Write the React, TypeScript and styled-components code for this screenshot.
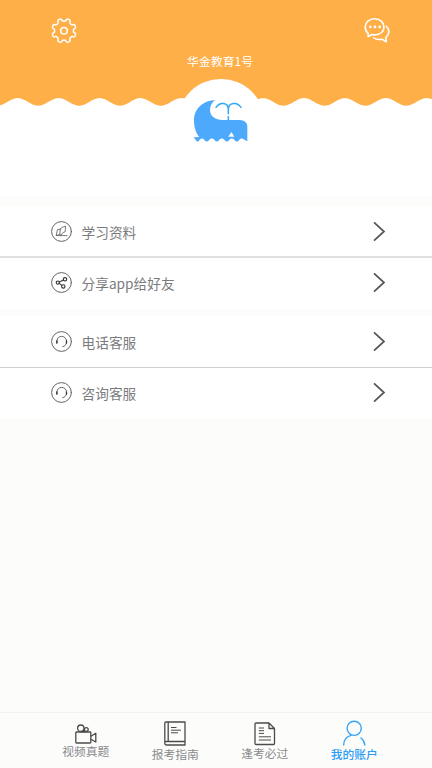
import React from 'react';
import styled, { createGlobalStyle } from 'styled-components';

const GlobalStyle = createGlobalStyle`
  * { box-sizing: border-box; }
  body { margin: 0; background: #fcfcfb; font-family: "Noto Sans CJK SC", sans-serif; }
  svg { display: block; flex: none; }
`;

const Screen = styled.div`
  display: flex;
  flex-direction: column;
  width: 432px;
  height: 768px;
  overflow: hidden;
  background: #fcfcfb;
`;

const Header = styled.header`
  position: relative;
  height: 196px;
  background: #fff;
`;

const Banner = styled.div`
  display: flex;
  flex-direction: column;
  align-items: center;
  height: 97px;
  background: #ffaf48;
`;

const TopActions = styled.div`
  display: flex;
  justify-content: space-between;
  width: 100%;
  padding: 17px 41px 0 50px;
`;

const IconButton = styled.button`
  padding: 0;
  border: 0;
  background: none;
  color: #fff;
`;

const UserName = styled.h1`
  margin: 8px 0 0 8px;
  font-size: 11.9px;
  font-weight: 400;
  line-height: 16px;
  color: #fff;
`;

const Avatar = styled.div`
  position: absolute;
  top: 79px;
  left: 177px;
  width: 88px;
  height: 88px;
  border-radius: 50%;
  background: #fff;
`;

const Group = styled.section<{ $gap: number }>`
  margin-top: ${(p) => p.$gap}px;
  background: #fff;
`;

const Row = styled.div<{ $line?: string; $lineWidth?: number }>`
  display: flex;
  align-items: flex-start;
  height: ${(p) => (p.$line ? 52 : 51)}px;
  padding: ${(p) => (p.$line ? 14 : 13)}px 46px 0 50px;
  border-bottom: ${(p) => (p.$line ? `${p.$lineWidth ?? 1}px solid ${p.$line}` : '0')};
  color: #626262;
`;

const RowLabel = styled.span`
  flex: 1;
  padding: 2px 0 0 8.5px;
  font-size: 13.7px;
  line-height: 20px;
  color: #7b7b7e;
`;

const TabBar = styled.nav`
  display: flex;
  height: 56px;
  margin-top: auto;
  padding: 0 33px 0 41px;
  border-top: 1px solid #f3f3f3;
`;

const Tab = styled.div<{ $active?: boolean; $top: number; $gap: number }>`
  display: flex;
  flex: 1;
  flex-direction: column;
  align-items: center;
  gap: ${(p) => p.$gap}px;
  padding-top: ${(p) => p.$top}px;
  color: ${(p) => (p.$active ? '#38a4f6' : '#4b4b4b')};
`;

const TabLabel = styled.span<{ $active?: boolean }>`
  font-size: 11.8px;
  font-weight: ${(p) => (p.$active ? 500 : 400)};
  line-height: 14px;
  white-space: nowrap;
  color: ${(p) => (p.$active ? '#2d9df4' : '#8b8b8d')};
`;

const PERIOD = 40.9;

function wavePath() {
  let d = 'M0 0H432V9';
  for (let x = 432; x >= 0; x -= 2) {
    const y = 4.9 - 3.8 * Math.cos(((x - 17.7) / PERIOD) * Math.PI * 2);
    d += `L${x} ${y.toFixed(2)}`;
  }
  return d + 'Z';
}

const Wave = () => (
  <svg width="432" height="10" viewBox="0 0 432 10">
    <path d={wavePath()} fill="#ffaf48" />
  </svg>
);

// Eight-toothed outline whose radius swings between root and tip.
function gearPath() {
  const steps = 144;
  let d = '';
  for (let i = 0; i <= steps; i++) {
    const a = (i / steps) * Math.PI * 2;
    const r = 10.8 + 1.4 * Math.tanh(2.3 * Math.cos(8 * (a - Math.PI / 8)));
    d += `${i ? 'L' : 'M'}${(14 + r * Math.cos(a)).toFixed(2)} ${(13.7 + r * Math.sin(a)).toFixed(2)}`;
  }
  return d + 'Z';
}

const GearIcon = () => (
  <svg width="28" height="28" viewBox="0 0 28 28" fill="none" stroke="currentColor" strokeWidth="1.5" strokeLinejoin="round">
    <path d={gearPath()} />
    <circle cx="14" cy="13.7" r="3.3" />
  </svg>
);

const ChatIcon = () => (
  <svg width="28" height="28" viewBox="0 0 28 28" fill="none" stroke="currentColor" strokeWidth="1.6" strokeLinecap="round" strokeLinejoin="round">
    <path d="M5.2 16.4C3.4 15 2.2 12.6 2.2 10C2.2 5.2 6.3 1.7 11.6 1.7S21 5.2 21 10S16.9 17.9 11.6 17.9Q10 17.9 8.8 17.5L5.2 19.6Z" />
    <path d="M23.3 9.3C26.6 12.5 27 16.8 22.8 20.6L23.3 24.8L19 22.3C15.3 22.9 12.4 22.2 10.3 20.5" />
    <g fill="currentColor" stroke="none">
      <circle cx="7.3" cy="9.9" r="1.3" />
      <circle cx="12" cy="9.9" r="1.3" />
      <circle cx="16.7" cy="9.9" r="1.3" />
    </g>
  </svg>
);

const WhaleLogo = () => (
  <svg width="88" height="88" viewBox="21 27 264 264" fill="none">
    <path
      d="M135 90C105 91 72 112 72 151C72 172 78 190 88 201L71 202L80 214Q85 217 89 209Q96 202 103 209Q110 220 118 209Q125 202 133 209Q141 220 148 209Q156 202 163 209Q171 220 178 209Q186 202 193 209Q201 220 208 209Q215 202 223 209L232 214V170Q231 150 209 150H158C136 150 120 139 120 120C120 107 126 97 135 90Z"
      fill="#4da9fb"
    />
    <path d="M175 200L184 186L193 200Z" fill="#fff" />
    <path d="M138 112C149 95 175 96 175 119V131M175 119C175 96 202 95 213 112" stroke="#32a7f5" strokeWidth="4.5" strokeLinecap="round" />
    <path d="M175 138V151" stroke="#32a7f5" strokeWidth="4.5" />
  </svg>
);

const RoundIcon = ({ children }: { children: React.ReactNode }) => (
  <svg width="23" height="23" viewBox="0 0 23 23" fill="none" stroke="currentColor" strokeWidth="1" strokeLinecap="round" strokeLinejoin="round">
    <circle cx="11.5" cy="11.5" r="9.9" />
    {children}
  </svg>
);

const BookIcon = () => (
  <RoundIcon>
    <path d="M10.3 9.2L7.4 9.7L6.2 15.6H17M10.3 9.2L9.8 14.6M6.4 15.3L9.8 14.6L11.2 15.4M10.3 9.2C11.2 7.6 13 6.8 15.5 6.2L15.2 11.8C13.4 12.2 11.8 13.2 11.2 15.2" strokeWidth=".85" />
  </RoundIcon>
);

const ShareIcon = () => (
  <RoundIcon>
    <g stroke="#343434" strokeWidth="1.1">
      <circle cx="7.8" cy="11.6" r="1.6" />
      <circle cx="15" cy="8.3" r="1.7" />
      <circle cx="13.3" cy="15.4" r="1.7" />
      <path d="M9.3 10.9L13.4 9M9.2 12.4L11.9 14.4" />
    </g>
  </RoundIcon>
);

const HeadsetIcon = () => (
  <RoundIcon>
    <path d="M7 13V11C7 8.2 9 6.4 11.6 6.4S16.4 8.2 16.5 11V12.5C16.2 14.8 14.8 16.3 12.7 16.7" stroke="#555" strokeWidth=".9" />
    <path d="M6.8 10.9V13M16.5 10.9V13" stroke="#333" strokeWidth="1.3" />
  </RoundIcon>
);

const Chevron = () => (
  <svg width="13" height="22" viewBox="0 0 13 22" fill="none" stroke="#555" strokeWidth="1.7">
    <path d="M1 2.3L11 11.5L1 20.7" />
  </svg>
);

const CameraIcon = () => (
  <svg width="22" height="20" viewBox="0 0 22 20" fill="none" stroke="currentColor" strokeWidth="1.3" strokeLinejoin="round">
    <rect x=".8" y="8" width="15" height="11" rx=".8" />
    <path d="M16 12.3L20.8 9.3V18L16 15.2M5.5 7.7H11" />
    <circle cx="5.8" cy="4.2" r="3.2" />
    <circle cx="11.3" cy="5.5" r="1.9" />
  </svg>
);

const GuideIcon = () => (
  <svg width="22" height="25" viewBox="0 0 22 25" fill="none" stroke="currentColor" strokeWidth="1.3" strokeLinejoin="round">
    <path d="M.8 22V2Q.8 1 2 1H21V20.5H2.2Q.8 20.5 .8 22.2T2.2 24H21V20.5M4.2 1V20.5" />
    <path d="M7 6.5H12.5M7 9.2H17M7 11.8H14" strokeWidth="1" />
  </svg>
);

const PaperIcon = () => (
  <svg width="22" height="24" viewBox="0 0 22 24" fill="none" stroke="currentColor" strokeWidth="1.3" strokeLinejoin="round">
    <path d="M2 1H15L20.5 6.5V21.5Q20.5 22.5 19.5 22.5H2Q1 22.5 1 21.5V2Q1 1 2 1ZM15 1V6.5H20.5" />
    <path d="M4.8 6H10M4.8 8.7H10M4.8 11.4H10M4.8 14.8H17M4.8 18H17" strokeWidth="1" />
  </svg>
);

const PersonIcon = () => (
  <svg width="24" height="27" viewBox="0 0 24 27" fill="none" stroke="currentColor" strokeWidth="1.4" strokeLinecap="round">
    <circle cx="12.2" cy="8.3" r="7.1" />
    <path d="M1.7 25C1.7 19.5 5 16.5 9 15.4M19 18Q22.3 20.5 22.8 25" />
  </svg>
);

export default function App() {
  return (
    <Screen>
      <GlobalStyle />
      <Header>
        <Banner>
          <TopActions>
            <IconButton aria-label="设置"><GearIcon /></IconButton>
            <IconButton aria-label="消息"><ChatIcon /></IconButton>
          </TopActions>
          <UserName>华金教育1号</UserName>
        </Banner>
        <Wave />
        <Avatar><WhaleLogo /></Avatar>
      </Header>
      <Group $gap={10}>
        <Row $line="#e0e0df" $lineWidth={2}><BookIcon /><RowLabel>学习资料</RowLabel><Chevron /></Row>
        <Row><ShareIcon /><RowLabel>分享app给好友</RowLabel><Chevron /></Row>
      </Group>
      <Group $gap={7}>
        <Row $line="#d0d0d0"><HeadsetIcon /><RowLabel>电话客服</RowLabel><Chevron /></Row>
        <Row><HeadsetIcon /><RowLabel>咨询客服</RowLabel><Chevron /></Row>
      </Group>
      <TabBar>
        <Tab $top={11} $gap={0}><CameraIcon /><TabLabel>视频真题</TabLabel></Tab>
        <Tab $top={8} $gap={1}><GuideIcon /><TabLabel>报考指南</TabLabel></Tab>
        <Tab $top={9} $gap={0}><PaperIcon /><TabLabel>逢考必过</TabLabel></Tab>
        <Tab $top={7} $gap={0} $active><PersonIcon /><TabLabel $active>我的账户</TabLabel></Tab>
      </TabBar>
    </Screen>
  );
}
